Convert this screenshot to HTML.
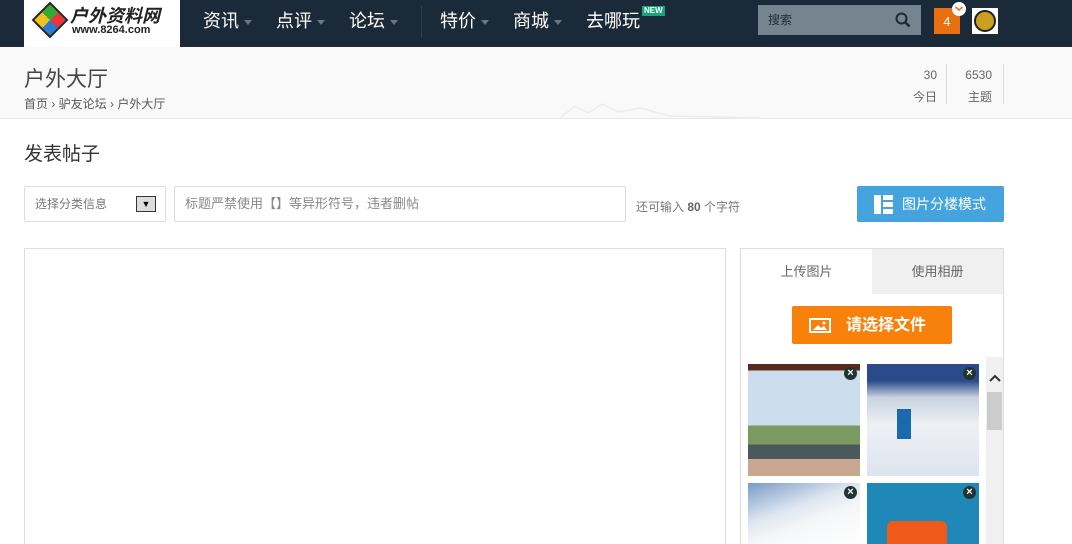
<!DOCTYPE html>
<html><head><meta charset="utf-8"><style>
*{margin:0;padding:0;box-sizing:border-box}
html,body{width:1072px;height:544px;overflow:hidden;background:#fff}
body{font-family:"Liberation Sans","Noto Sans CJK SC",sans-serif}
#w{position:relative;width:1072px;height:544px;overflow:hidden}
.a{position:absolute}
.hd{left:0;top:0;width:1072px;height:47px;background:#1b2a38}
.nav{color:#fff;font-size:18px;top:7px}
.tri{display:inline-block;width:0;height:0;border-left:4px solid transparent;border-right:4px solid transparent;border-top:5px solid #6b7682;vertical-align:middle;margin-left:5px}
.ph{position:absolute;width:112px;height:112px}
.x{position:absolute;right:3px;top:3px;width:13px;height:13px;border-radius:50%;background:#233;color:#fff;font-size:11px;line-height:13px;text-align:center;font-weight:bold}
</style></head><body><div id="w">
<div class="a hd"></div>
<div class="a" style="left:24px;top:0;width:156px;height:47px;background:#fff"></div>
<div class="a" style="left:37px;top:7px;width:26px;height:26px;transform:rotate(45deg);background:conic-gradient(#e33 0 25%,#2a7ad8 0 50%,#f3c21a 0 75%,#3a3 0);border:2px solid #222"></div>
<div class="a" style="left:70px;top:2px;font-size:18px;font-weight:bold;color:#222;font-style:italic">户外资料网</div>
<div class="a" style="left:72px;top:24px;font-size:11px;font-weight:bold;color:#222">www.8264.com</div>
<div class="a nav" style="left:203px">资讯<span class="tri"></span></div>
<div class="a nav" style="left:276px">点评<span class="tri"></span></div>
<div class="a nav" style="left:349px">论坛<span class="tri"></span></div>
<div class="a" style="left:421px;top:6px;width:1px;height:32px;background:#2f3e4c"></div>
<div class="a nav" style="left:440px">特价<span class="tri"></span></div>
<div class="a nav" style="left:513px">商城<span class="tri"></span></div>
<div class="a nav" style="left:586px">去哪玩</div>
<div class="a" style="left:642px;top:6px;background:#1aa37a;color:#fff;font-size:8px;font-weight:bold;padding:0 2px;line-height:10px">NEW</div>
<div class="a" style="left:758px;top:5px;width:163px;height:30px;background:#76848f;color:#1b2a38;font-size:12px;line-height:30px;padding-left:10px">搜索
<svg style="position:absolute;right:10px;top:7px" width="16" height="16" viewBox="0 0 16 16"><circle cx="6.5" cy="6.5" r="5" fill="none" stroke="#1b2a38" stroke-width="2"/><path d="M10 10l4.5 4.5" stroke="#1b2a38" stroke-width="2.4"/></svg></div>
<div class="a" style="left:934px;top:8px;width:26px;height:26px;background:#e8700e;color:#fff;font-size:13px;text-align:center;line-height:28px">4</div>
<div class="a" style="left:952px;top:2px;width:14px;height:14px;border-radius:50%;background:#fff"><svg width="14" height="14"><path d="M3.5 5 L7 8 L10.5 5" fill="none" stroke="#e8700e" stroke-width="1.6"/></svg></div>
<div class="a" style="left:972px;top:8px;width:26px;height:26px;background:#fff"><div style="margin:2px;width:22px;height:22px;border-radius:50%;background:#c9a020;border:2px solid #222"></div></div>

<div class="a" style="left:0;top:47px;width:1072px;height:72px;background:#f9f9f9;border-bottom:1px solid #e8e8e8"></div>
<svg class="a" style="left:560px;top:98px" width="200" height="21"><path d="M0 20 L15 8 L28 15 L42 6 L58 14 L80 10 L110 18 L200 20" fill="none" stroke="#ececec" stroke-width="1.5"/></svg>
<div class="a" style="left:24px;top:63px;font-size:21px;color:#444">户外大厅</div>
<div class="a" style="left:24px;top:95px;font-size:12px;color:#555">首页 › 驴友论坛 › 户外大厅</div>
<div class="a" style="left:900px;top:64px;width:37px;text-align:right;font-size:12px;color:#666;line-height:22px">30<br>今日</div>
<div class="a" style="left:946px;top:64px;width:1px;height:40px;background:#ddd"></div>
<div class="a" style="left:955px;top:64px;width:37px;text-align:right;font-size:12px;color:#666;line-height:22px">6530<br>主题</div>
<div class="a" style="left:1003px;top:64px;width:1px;height:40px;background:#ddd"></div>

<div class="a" style="left:24px;top:139px;font-size:19px;color:#333">发表帖子</div>
<div class="a" style="left:24px;top:186px;width:142px;height:36px;border:1px solid #ddd;border-radius:2px;font-size:12px;color:#777;line-height:34px;padding-left:10px">选择分类信息
<div style="position:absolute;right:9px;top:9px;width:20px;height:16px;border:1px solid #333;background:#ddd;font-size:9px;line-height:14px;text-align:center;color:#000">▼</div></div>
<div class="a" style="left:174px;top:186px;width:452px;height:36px;border:1px solid #ddd;border-radius:2px;font-size:13px;color:#888;line-height:34px;padding-left:10px">标题严禁使用【】等异形符号，违者删帖</div>
<div class="a" style="left:636px;top:198px;font-size:12px;color:#777">还可输入 <b style="color:#666">80</b> 个字符</div>
<div class="a" style="left:857px;top:186px;width:147px;height:36px;background:#45a4de;border-radius:2px;color:#fff;font-size:14px;line-height:36px;padding-left:45px">图片分楼模式
<svg style="position:absolute;left:17px;top:9px" width="19" height="19"><rect x="0" y="0" width="7" height="19" fill="#fff"/><rect x="9" y="0" width="10" height="5" fill="#fff"/><rect x="9" y="7" width="10" height="5" fill="#fff"/><rect x="9" y="14" width="10" height="5" fill="#fff"/></svg></div>

<div class="a" style="left:24px;top:248px;width:702px;height:310px;border:1px solid #ddd"></div>
<div class="a" style="left:740px;top:248px;width:264px;height:310px;border:1px solid #ddd"></div>
<div class="a" style="left:741px;top:249px;width:131px;height:45px;font-size:13px;color:#666;text-align:center;line-height:45px">上传图片</div>
<div class="a" style="left:872px;top:249px;width:131px;height:45px;background:#f0f0f0;font-size:13px;color:#666;text-align:center;line-height:45px">使用相册</div>
<div class="a" style="left:792px;top:306px;width:160px;height:38px;background:#f7810a;border-radius:2px;color:#fff;font-size:16px;font-weight:bold;line-height:40px;padding-left:54px">请选择文件
<svg style="position:absolute;left:17px;top:12px" width="22" height="15"><rect x="1" y="1" width="20" height="13" fill="none" stroke="#fff" stroke-width="2"/><path d="M4 12 L9 7 L12 10 L15 8 L18 12Z" fill="#fff"/><circle cx="15" cy="5" r="1.5" fill="#fff"/></svg></div>
<div class="a" style="left:986px;top:357px;width:17px;height:190px;background:#f0f0f0"></div>
<div class="a" style="left:987px;top:392px;width:15px;height:38px;background:#ccc"></div>
<svg class="a" style="left:989px;top:374px" width="12" height="8"><path d="M1 7 L6 2 L11 7" fill="none" stroke="#333" stroke-width="2"/></svg>
<div class="ph" style="left:748px;top:364px;background:linear-gradient(#5a2a1a 0 6%,#cde 6% 55%,#7a9a60 55% 72%,#4a5a5a 72% 85%,#c8a890 85%)"><div class="x">×</div></div>
<div class="ph" style="left:867px;top:364px;background:linear-gradient(#2a4a8a 0 15%,#c8d4e0 30%,#eef0f4 55%,#dde4ee)"><div class="x">×</div><div style="position:absolute;left:30px;top:45px;width:14px;height:30px;background:#1a6ab0"></div></div>
<div class="ph" style="left:748px;top:483px;height:61px;background:linear-gradient(160deg,#7a9ac8 0,#dde6f0 40%,#f4f6f8 60%,#fff)"><div class="x">×</div></div>
<div class="ph" style="left:867px;top:483px;height:61px;background:#1f88b8"><div class="x">×</div><div style="position:absolute;left:20px;top:38px;width:60px;height:23px;background:#f05a1a;border-radius:6px 6px 0 0"></div></div>
</div></body></html>
